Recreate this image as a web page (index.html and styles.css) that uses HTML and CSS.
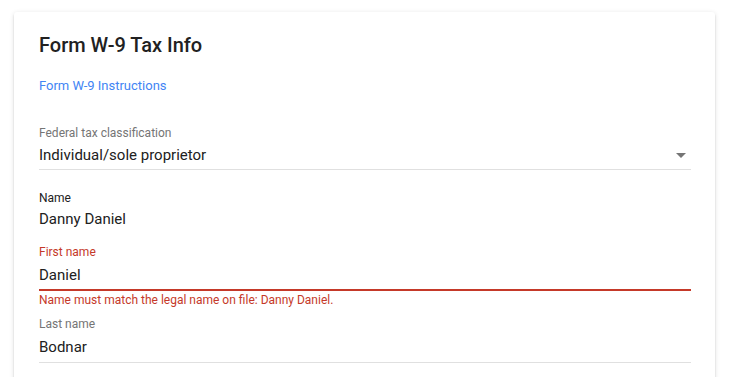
FILE: index.html
```html
<!DOCTYPE html>
<html lang="en">
<head>
  <meta charset="UTF-8" />
  <title>Form W-9 Tax Info</title>
  <link rel="stylesheet" href="styles.css">
</head>
<body>

  <div class="card">
    <h2 class="card-title">Form W-9 Tax Info</h2>
    <a class="link" href="#">Form W-9 Instructions</a>

    <!-- Classification dropdown -->
    <div class="field field-fed">
      <div class="label">Federal tax classification</div>
      <div class="value value-select">
        <span>Individual/sole proprietor</span>
        <span class="arrow"></span>
      </div>
    </div>

    <!-- Read-only name -->
    <div class="field field-plain">
      <div class="label label-dark">Name</div>
      <div class="value">Danny Daniel</div>
    </div>

    <div class="field field-first invalid">
      <div class="label">First name</div>
      <div class="value">Daniel</div>
    </div>
    <div class="error">Name must match the legal name on file: Danny Daniel.</div>

    <div class="field field-last">
      <div class="label">Last name</div>
      <div class="value">Bodnar</div>
    </div>
  </div>

</body>
</html>
```

FILE: styles.css
```css
* {
  box-sizing: border-box;
  font-family: Roboto, 'Noto Sans', sans-serif;
}
body {
  margin: 0;
  padding: 12px 20px 0 14px;
  background: #fff;
  color: #212121;
}

/* === Card === */
.card {
  background: #fff;
  border-radius: 3px;
  padding: 19px 24px 40px 25px;
  min-height: 420px;
  box-shadow: 0 2px 2px 0 rgba(0, 0, 0, 0.14),
              0 1px 5px 0 rgba(0, 0, 0, 0.12),
              0 3px 1px -2px rgba(0, 0, 0, 0.2);
}
.card-title {
  margin: 0;
  font-size: 20px;
  line-height: 28px;
  font-weight: 500;
  color: #212121;
}
.link {
  display: block;
  margin-top: 17px;
  font-size: 13px;
  line-height: 20px;
  color: #4285f4;
  text-decoration: none;
}

/* === Fields === */
.field {
  padding-bottom: 4px;
  border-bottom: 1px solid #e0e0e0;
}
.label {
  font-size: 12px;
  line-height: 16px;
  color: #757575;
}
.label-dark { color: #212121; }
.value {
  margin-top: 4px;
  font-size: 15px;
  line-height: 20px;
  color: #212121;
}
.value-select {
  display: flex;
  justify-content: space-between;
  align-items: center;
}
.arrow {
  width: 0;
  height: 0;
  margin-right: 5px;
  border-left: 5px solid transparent;
  border-right: 5px solid transparent;
  border-top: 5px solid #757575;
}
.field-fed { margin-top: 29px; }
.field-plain {
  margin-top: 20px;
  border-bottom: none;
  padding-bottom: 0;
}
.field-plain .value { margin-top: 3px; }
.field-first { margin-top: 15px; }
.field-first .value { margin-top: 5px; }
.field.invalid { border-bottom: 2px solid #c53929; }
.field.invalid .label { color: #c53929; }
.error {
  margin-top: 1px;
  font-size: 12px;
  line-height: 16px;
  color: #c53929;
}
.field-last {
  margin-top: 8px;
  padding-bottom: 5px;
}
.field-last .value { margin-top: 5px; }
```
